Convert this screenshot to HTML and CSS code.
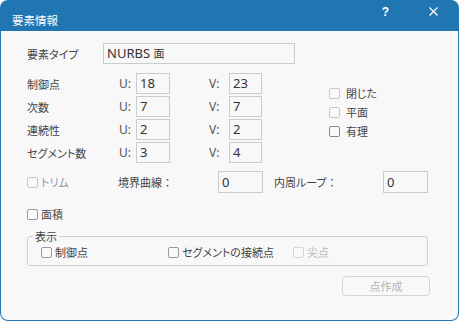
FILE: index.html
```html
<!DOCTYPE html>
<html lang="ja">
<head>
<meta charset="utf-8">
<title>要素情報</title>
<link rel="stylesheet" href="styles.css">
</head>
<body>
<div class="window">
  <div class="titlebar">
    <span class="title">要素情報</span>
    <span class="help">?</span>
    <svg class="close" width="9" height="9" viewBox="0 0 9 9"><path d="M0.5 0.5L8.5 8.5M8.5 0.5L0.5 8.5" stroke="#fff" stroke-width="1.2" fill="none"/></svg>
  </div>
  <div class="body">
    <div class="row type-row">
      <span class="type-label jp">要素タイプ</span>
      <div class="field type-field">NURBS <span class="jp">面</span></div>
    </div>
    <div class="params">
      <div class="grid">
        <span class="jp">制御点</span><span class="uv">U:</span><div class="field">18</div><span></span><span class="uv">V:</span><div class="field">23</div>
        <span class="jp">次数</span><span class="uv">U:</span><div class="field">7</div><span></span><span class="uv">V:</span><div class="field">7</div>
        <span class="jp">連続性</span><span class="uv">U:</span><div class="field">2</div><span></span><span class="uv">V:</span><div class="field">2</div>
        <span class="jp">セグメント数</span><span class="uv">U:</span><div class="field">3</div><span></span><span class="uv">V:</span><div class="field">4</div>
      </div>
      <div class="flags">
        <div class="check wide"><span class="box light"></span>閉じた</div>
        <div class="check wide"><span class="box light"></span>平面</div>
        <div class="check wide"><span class="box dark"></span>有理</div>
      </div>
    </div>
    <div class="row trim-row">
      <div class="check disabled trim"><span class="box light"></span>トリム</div>
      <span class="trim-label first jp">境界曲線<span class="colon">：</span></span>
      <div class="field small">0</div>
      <span class="trim-label second jp">内周ループ<span class="colon">：</span></span>
      <div class="field small">0</div>
    </div>
    <div class="check area"><span class="box"></span>面積</div>
    <fieldset class="group">
      <legend class="jp">表示</legend>
      <div class="group-row">
        <div class="check g1"><span class="box"></span>制御点</div>
        <div class="check g2"><span class="box"></span>セグメントの接続点</div>
        <div class="check disabled2"><span class="box faint"></span>尖点</div>
      </div>
    </fieldset>
    <div class="actions">
      <div class="button jp">点作成</div>
    </div>
  </div>
</div>
</body>
</html>
```
FILE: styles.css
```css
* { box-sizing: border-box; }
html, body { margin: 0; padding: 0; background: #ffffff; }
body {
  font-family: "Noto Sans", "Noto Sans CJK JP", sans-serif;
  font-size: 12px;
  color: #444;
}
.jp {
  font-family: "Noto Sans CJK JP", sans-serif;
  font-size: 11px;
  font-feature-settings: "palt";
}
.colon { font-feature-settings: normal; }
.window {
  width: 459px;
  height: 321px;
  background: #1f76b0;
  border-radius: 8px;
  padding: 0 1px 1px 1px;
  display: flex;
  flex-direction: column;
  overflow: hidden;
}
.titlebar {
  height: 31px;
  display: flex;
  align-items: flex-start;
  color: #fff;
  flex: none;
}
.title {
  font-family: "Noto Sans CJK JP", sans-serif;
  font-size: 11.5px;
  line-height: 16px;
  margin: 12px 0 0 11px;
}
.help {
  font-family: "Liberation Sans", sans-serif;
  font-weight: bold;
  font-size: 12px;
  line-height: 12px;
  margin: 6px 0 0 auto;
}
.close { margin: 7px 20px 0 40px; }
.body {
  flex: 1;
  background: #f8f8f8;
  border-radius: 0 0 7px 7px;
  padding: 12px 0 0 26px;
  display: flex;
  flex-direction: column;
  align-items: flex-start;
}
.row { display: flex; align-items: center; }
.type-label { width: 76px; flex: none; }
.field {
  border: 1px solid #cccccc;
  background: #f8f8f8;
  height: 21px;
  line-height: 19px;
  padding-left: 3px;
  font-size: 13px;
  color: #333;
  flex: none;
}
.type-field { width: 192px; }
.params { display: flex; margin-top: 9px; }
.grid {
  display: grid;
  grid-template-columns: 92px 17px 34px 39px 20px 33px;
  grid-auto-rows: 21px;
  row-gap: 2px;
  align-items: center;
}
.uv { font-size: 12px; color: #555; }
.flags {
  margin-left: 67px;
  margin-top: 11px;
  display: flex;
  flex-direction: column;
}
.check {
  display: flex;
  align-items: center;
  height: 19px;
  line-height: 19px;
  font-family: "Noto Sans CJK JP", sans-serif;
  font-size: 11px;
  font-feature-settings: "palt";
  gap: 3px;
  flex: none;
  white-space: nowrap;
}
.check.wide { gap: 6px; }
.box {
  width: 11px;
  height: 11px;
  border: 1px solid #9a9a9a;
  border-radius: 2px;
  background: #fafafa;
  flex: none;
}
.box.light { border-color: #c8c8c8; }
.box.dark { border-color: #8a8a8a; }
.box.faint { border-color: #d4d4d4; }
.trim-row { margin-top: 8px; height: 22px; }
.trim { width: 91px; color: #8a96a8; }
.trim-label { flex: none; }
.trim-label.first { width: 100px; }
.trim-label.second { width: 109px; margin-left: 11px; }
.field.small { width: 45px; height: 22px; line-height: 20px; }
.area { margin-top: 12px; }
.group {
  margin: 5px 0 0 0;
  width: 401px;
  border: 1px solid #cfcfcf;
  border-radius: 3px;
  padding: 0 0 3px 13px;
}
.group legend {
  padding: 0 2px;
  margin-left: -8px;
  line-height: 14px;
}
.group-row { display: flex; }
.g1 { width: 127px; }
.g2 { width: 125px; }
.disabled2 { color: #b8b8b8; }
.actions {
  align-self: stretch;
  display: flex;
  justify-content: flex-end;
  padding-right: 28px;
  margin-top: 10px;
}
.button {
  width: 88px;
  height: 20px;
  border: 1px solid #d4d4d4;
  border-radius: 4px;
  background: #f8f8f8;
  color: #b4b4b4;
  text-align: center;
  line-height: 18px;
}
```
